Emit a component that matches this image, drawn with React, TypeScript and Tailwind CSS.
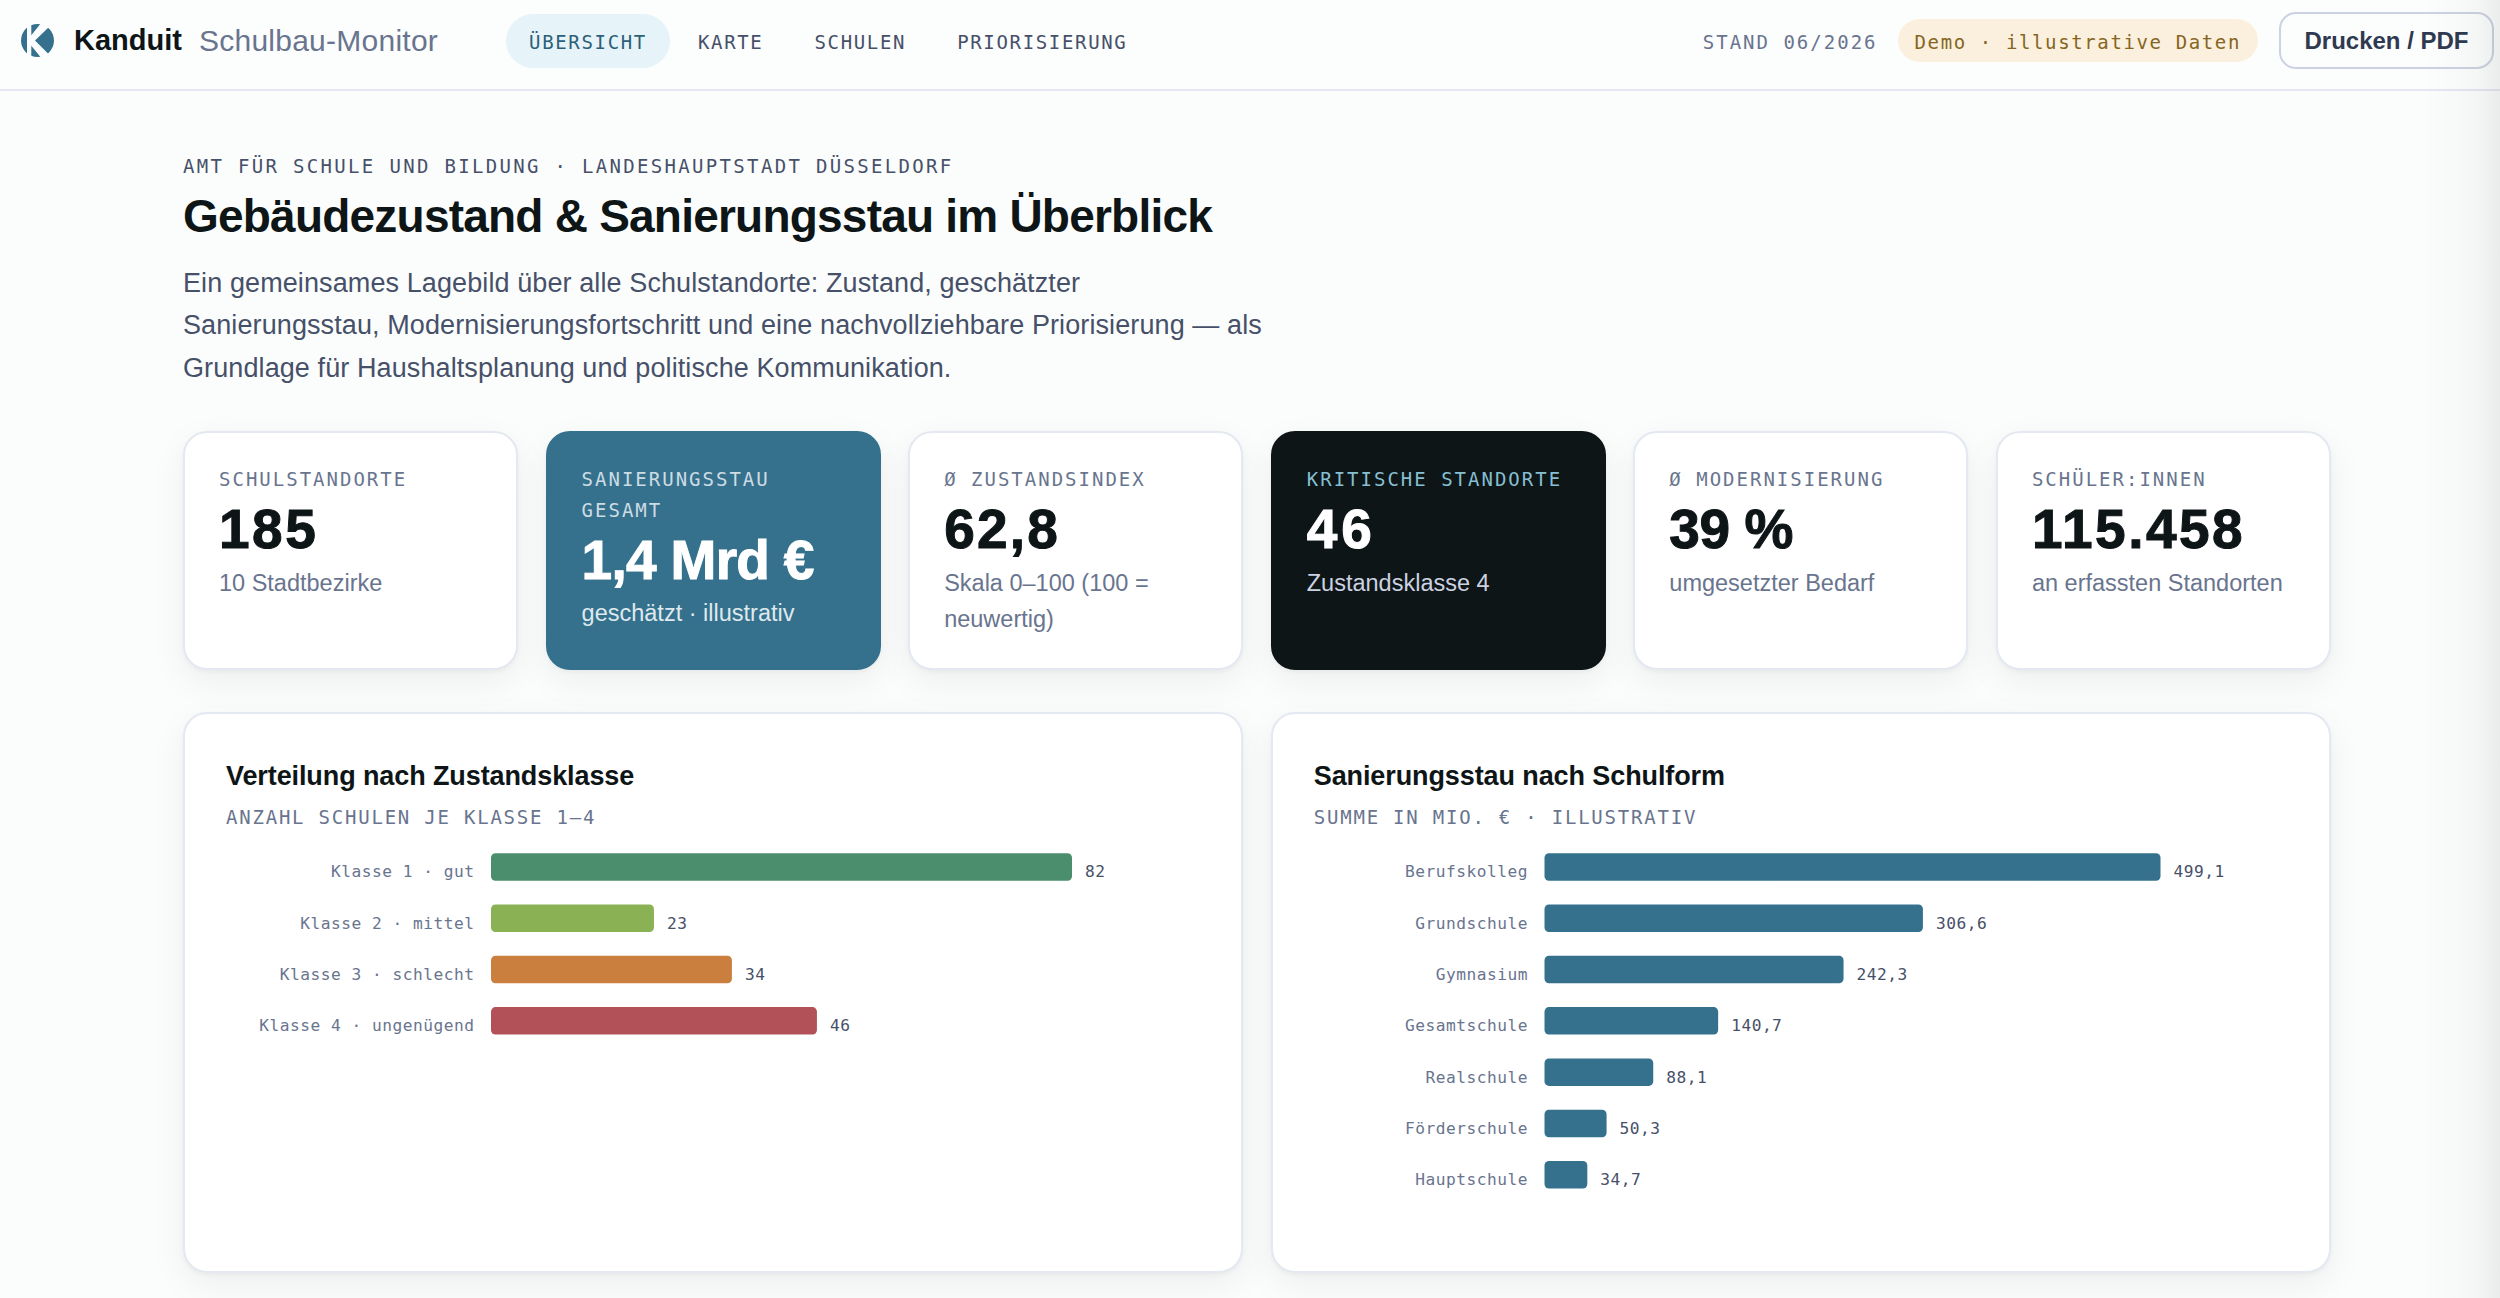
import React from 'react';
import { clsx } from 'clsx';

interface Kpi {
  label: string;
  value: string;
  sub: string;
  tone?: 'brand' | 'dark';
  tracking: string;
}

interface Bar {
  label: string;
  value: number;
  color: string;
}

interface BarChartProps {
  data: Bar[];
  offset: number; // x of the bar start
  maxWidth: number; // width of the longest bar
}

const NAV = ['Übersicht', 'Karte', 'Schulen', 'Priorisierung'];

const KPIS: Kpi[] = [
  { label: 'Schulstandorte', value: '185', sub: '10 Stadtbezirke', tracking: 'tracking-[2.5px]' },
  { label: 'Sanierungsstau gesamt', value: '1,4 Mrd €', sub: 'geschätzt · illustrativ', tone: 'brand', tracking: 'tracking-[-0.7px]' },
  { label: 'Ø Zustandsindex', value: '62,8', sub: 'Skala 0–100 (100 = neuwertig)', tracking: 'tracking-[2.2px]' },
  { label: 'Kritische Standorte', value: '46', sub: 'Zustandsklasse 4', tone: 'dark', tracking: 'tracking-[4px]' },
  { label: 'Ø Modernisierung', value: '39 %', sub: 'umgesetzter Bedarf', tracking: 'tracking-[-0.4px]' },
  { label: 'Schüler:innen', value: '115.458', sub: 'an erfassten Standorten', tracking: 'tracking-[2.5px]' },
];

const KLASSEN: Bar[] = [
  { label: 'Klasse 1 · gut', value: 82, color: '#4b8e6e' },
  { label: 'Klasse 2 · mittel', value: 23, color: '#8ab254' },
  { label: 'Klasse 3 · schlecht', value: 34, color: '#cb7f3f' },
  { label: 'Klasse 4 · ungenügend', value: 46, color: '#b25158' },
];

const SCHULFORMEN: Bar[] = [
  { label: 'Berufskolleg', value: 499.1, color: '#35718d' },
  { label: 'Grundschule', value: 306.6, color: '#35718d' },
  { label: 'Gymnasium', value: 242.3, color: '#35718d' },
  { label: 'Gesamtschule', value: 140.7, color: '#35718d' },
  { label: 'Realschule', value: 88.1, color: '#35718d' },
  { label: 'Förderschule', value: 50.3, color: '#35718d' },
  { label: 'Hauptschule', value: 34.7, color: '#35718d' },
];

const ROW = 51.3;

function Logo() {
  return (
    <svg viewBox="0 0 33 33" className="w-[33px] h-[33px] shrink-0">
      <circle cx="16.5" cy="16.5" r="16.5" fill="#35718d" />
      <path d="M6 0H10.3V11.2L19.3 0H24L28 3L14 16.5L27.5 30L23 33H19.5L10.3 21.8V33H6Z" fill="#fcfdfe" />
    </svg>
  );
}

function Header() {
  return (
    <header className="flex items-center h-[91px] pl-[21px] pr-[6px] pb-[8px] bg-[#fcfdfd] border-b-2 border-[#e4e7f1] whitespace-nowrap">
      <Logo />
      <span className="ml-[20px] text-[29px] font-bold text-[#0e1517]">Kanduit</span>
      <span className="ml-[17px] text-[30px] tracking-[0.25px] text-[#69748e]">Schulbau-Monitor</span>

      <nav className="ml-[67.5px] flex items-center gap-[4px] font-['DejaVu_Sans_Mono',monospace] text-[19px] tracking-[1.66px] uppercase">
        {NAV.map((item, i) => (
          <a
            key={item}
            className={clsx(
              'flex items-center h-[54px] px-[23.5px] pt-[4px] rounded-full',
              i === 0 ? 'bg-[#e6f3f8] text-[#2c5f78]' : 'text-[#475069]'
            )}
          >
            {item}
          </a>
        ))}
      </nav>

      <div className="ml-auto flex items-center font-['DejaVu_Sans_Mono',monospace] text-[19px]">
        <span className="mr-[20px] pt-[3px] tracking-[2px] text-[#69748e]">STAND 06/2026</span>
        <span className="mr-[21px] flex items-center h-[43px] px-[17px] pt-[3px] rounded-full bg-[#fbf0dd] tracking-[1.62px] text-[#85651f]">
          Demo · illustrative Daten
        </span>
        <button className="w-[215px] h-[57px] border-2 border-[#cbd2e1] rounded-[17px] font-['Liberation_Sans',sans-serif] text-[24px] font-bold text-[#2f3950]">
          Drucken / PDF
        </button>
      </div>
    </header>
  );
}

function KpiCard({ label, value, sub, tone, tracking }: Kpi) {
  return (
    <div
      className={clsx(
        'h-[239px] pt-[31px] px-[34px] border-2 rounded-[24px] shadow-[0_2px_4px_rgba(14,21,23,0.04),0_12px_36px_rgba(14,21,23,0.06)]',
        !tone && 'bg-white border-[#e4e8f1]',
        tone === 'brand' && 'bg-[#35718d] border-[#35718d]',
        tone === 'dark' && 'bg-[#0e1517] border-[#0e1517]'
      )}
    >
      <div
        className={clsx(
          "font-['DejaVu_Sans_Mono',monospace] text-[19px] leading-[30.6px] tracking-[2px] uppercase",
          !tone && 'text-[#69748e]',
          tone === 'brand' && 'text-[#cddce4]',
          tone === 'dark' && 'text-[#86bfd2]'
        )}
      >
        {label}
      </div>
      <div
        className={clsx(
          'mt-[4.5px] text-[55px] leading-[60px] font-bold whitespace-nowrap [-webkit-text-stroke:1px_currentColor]',
          tracking,
          tone ? 'text-white' : 'text-[#0e1517]'
        )}
      >
        {value}
      </div>
      <div
        className={clsx(
          'mt-[5.5px] text-[23.5px] leading-[36px]',
          !tone && 'text-[#69748e]',
          tone === 'brand' && 'text-[#dfe9ee]',
          tone === 'dark' && 'text-[#cbd2e1]'
        )}
      >
        {sub}
      </div>
    </div>
  );
}

function BarChart({ data, offset, maxWidth }: BarChartProps) {
  const max = Math.max(...data.map(d => d.value));

  return (
    <svg width="970" height="380" className="mt-[9px] font-['DejaVu_Sans_Mono',monospace] text-[16.2px] tracking-[0.5px]">
      {data.map((d, i) => {
        const width = (d.value / max) * maxWidth;
        return (
          <g key={d.label}>
            <text x={offset - 16.5} y={36.3 + i * ROW} textAnchor="end" fill="#69748e">
              {d.label}
            </text>
            <rect x={offset} y={12.2 + i * ROW} width={width} height="27.5" rx="4.5" fill={d.color} />
            <text x={offset + width + 13} y={36.3 + i * ROW} fill="#475069">
              {d.value.toLocaleString('de-DE')}
            </text>
          </g>
        );
      })}
    </svg>
  );
}

function Panel({ title, sub, children }: { title: string; sub: string; children: React.ReactNode }) {
  return (
    <section className="h-[561px] pt-[43px] px-[41px] bg-white border-2 border-[#e4e8f1] rounded-[24px] shadow-[0_2px_4px_rgba(14,21,23,0.04),0_12px_36px_rgba(14,21,23,0.06)]">
      <h2 className="text-[27px] leading-[38px] font-bold tracking-[-0.1px] text-[#0e1517]">{title}</h2>
      <div className="mt-[7px] font-['DejaVu_Sans_Mono',monospace] text-[19px] leading-[30px] tracking-[1.78px] uppercase text-[#69748e]">
        {sub}
      </div>
      {children}
    </section>
  );
}

export default function App() {
  return (
    <div className="relative w-[2500px] h-[1298px] overflow-hidden bg-[#fbfdfc] font-['Liberation_Sans',Arial,sans-serif]">
      <Header />

      <main className="ml-[183px] w-[2148px] pt-[60px]">
        <div className="font-['DejaVu_Sans_Mono',monospace] text-[19px] leading-[30px] tracking-[2.32px] uppercase text-[#475069]">
          Amt für Schule und Bildung · Landeshauptstadt Düsseldorf
        </div>
        <h1 className="mt-[9px] text-[46px] leading-[52px] font-bold tracking-[-0.78px] text-[#0e1517]">
          Gebäudezustand &amp; Sanierungsstau im Überblick
        </h1>
        <p className="mt-[20px] max-w-[1086px] text-[27px] leading-[42.4px] tracking-[0.1px] text-[#475069]">
          Ein gemeinsames Lagebild über alle Schulstandorte: Zustand, geschätzter Sanierungsstau,
          Modernisierungsfortschritt und eine nachvollziehbare Priorisierung — als Grundlage für
          Haushaltsplanung und politische Kommunikation.
        </p>

        <div className="mt-[42px] grid grid-cols-6 gap-[27.5px]">
          {KPIS.map(kpi => (
            <KpiCard key={kpi.label} {...kpi} />
          ))}
        </div>

        <div className="mt-[42px] grid grid-cols-2 gap-[27.5px]">
          <Panel title="Verteilung nach Zustandsklasse" sub="Anzahl Schulen je Klasse 1–4">
            <BarChart data={KLASSEN} offset={265} maxWidth={581} />
          </Panel>
          <Panel title="Sanierungsstau nach Schulform" sub="Summe in Mio. € · illustrativ">
            <BarChart data={SCHULFORMEN} offset={230.5} maxWidth={616} />
          </Panel>
        </div>
      </main>

      {/* soft shade along the right window edge */}
      <div className="absolute inset-y-0 right-0 w-[80px] pointer-events-none bg-[linear-gradient(to_right,transparent,rgba(20,20,20,0.015)_45%,rgba(20,20,20,0.035)_75%,rgba(20,20,20,0.075))]" />
    </div>
  );
}
